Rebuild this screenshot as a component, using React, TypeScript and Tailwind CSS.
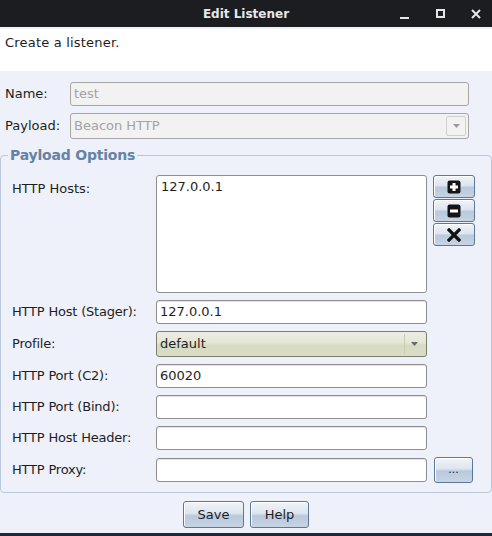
import React from "react";

const FONT = { fontFamily: '"DejaVu Sans", "Liberation Sans", sans-serif' };

function TextBox({ value = "", className = "" }: { value?: string; className?: string }) {
	return (
		<div
			className={`h-[24px] w-[271px] rounded-[3px] border border-[#8e8e8e] bg-white px-[3px] text-[13px] leading-[22px] text-[#1e1e1e] shadow-[inset_0_1px_1px_rgba(0,0,0,0.12)] ${className}`}
		>
			{value}
		</div>
	);
}

function BlueButton({ children, className = "" }: { children: React.ReactNode; className?: string }) {
	return (
		<div
			className={`flex items-center justify-center rounded-[3px] border border-[#5c7896] bg-[linear-gradient(to_bottom,#f1f4f9_0%,#dde5ef_45%,#b9c9dc_55%,#c6d4e4_100%)] shadow-[inset_1px_1px_0_#ffffff] text-[13px] text-[#1e1e1e] ${className}`}
		>
			{children}
		</div>
	);
}

function Row({ label, children }: { label: string; children: React.ReactNode }) {
	return (
		<div className="flex items-center">
			<div className="w-[144px] text-[13px] tracking-[-0.2px] text-[#1e1e1e]">{label}</div>
			{children}
		</div>
	);
}

function SquareIcon({ kind }: { kind: "plus" | "minus" | "x" }) {
	if (kind === "x") {
		return (
			<svg width="14" height="14" viewBox="0 0 14 14">
				<path d="M2 2 L12 12 M12 2 L2 12" stroke="#111" strokeWidth="3.2" strokeLinecap="square" />
			</svg>
		);
	}
	return (
		<svg width="14" height="14" viewBox="0 0 14 14">
			<rect x="0.5" y="0.5" width="13" height="13" rx="2" fill="#141414" />
			<rect x="3" y="5.5" width="8" height="3" fill="#fff" />
			{kind === "plus" && <rect x="5.5" y="3" width="3" height="8" fill="#fff" />}
		</svg>
	);
}

export default function App() {
	return (
		<div className="flex h-[536px] w-[492px] flex-col overflow-hidden bg-[#eef1f9]" style={FONT}>
			<div className="relative flex h-[27px] shrink-0 items-center justify-center bg-[#1b1d21]">
				<span className="text-[12px] font-bold text-[#e8e8e8]">Edit Listener</span>
				<div className="absolute right-[-2px] top-0 flex h-full items-center">
					<div className="flex w-[36px] justify-center pt-[8px]">
						<div className="h-[2px] w-[9px] bg-[#e6e6e6]" />
					</div>
					<div className="flex w-[36px] justify-center">
						<div className="h-[9px] w-[9px] border-[2px] border-[#e6e6e6]" />
					</div>
					<div className="flex w-[36px] justify-center">
						<svg width="10" height="10" viewBox="0 0 10 10">
							<path d="M1 1 L9 9 M9 1 L1 9" stroke="#e6e6e6" strokeWidth="2" />
						</svg>
					</div>
				</div>
			</div>

			<div className="mt-[2px] h-[42px] bg-white px-[5px] pt-[5px] text-[13px] leading-[18px] tracking-[0.2px] text-[#1e1e1e]">
				Create a listener.
			</div>

			<div className="mt-[11px] flex flex-col gap-[7px] px-[5px]">
				<div className="flex items-center">
					<div className="w-[65px] text-[13px] text-[#1e1e1e]">Name:</div>
					<div className="h-[24px] w-[399px] rounded-[3px] border border-[#a6a6a6] bg-[#f2f2f2] px-[3px] text-[13px] leading-[22px] text-[#a3a3a3]">
						test
					</div>
				</div>
				<div className="flex items-center">
					<div className="w-[65px] text-[13px] text-[#1e1e1e]">Payload:</div>
					<div className="flex h-[26px] w-[399px] items-center justify-between rounded-[3px] border border-[#a6a6a6] bg-[#f2f2f2] pl-[3px] pr-[2px] text-[13px] text-[#a3a3a3]">
						<span>Beacon HTTP</span>
						<div className="flex h-[20px] w-[20px] items-center justify-center rounded-[2px] border border-[#d0d0d0]">
							<svg width="7" height="4" viewBox="0 0 7 4">
								<path d="M0 0 H7 L3.5 4 Z" fill="#9a9a9a" />
							</svg>
						</div>
					</div>
				</div>
			</div>

			<fieldset className="mx-0 mt-[7px] rounded-[4px] border border-[#b9c7d9] pb-[9px] pl-[11px] pr-[14px] pt-[11px]">
				<legend className="ml-[-4px] px-[2px] text-[14px] font-bold leading-[18px] tracking-[-0.2px] text-[#6483a6]">
					Payload Options
				</legend>
				<div className="flex flex-col gap-[7px]">
					<div className="flex items-start">
						<div className="w-[144px] pt-[4px] text-[13px] text-[#1e1e1e]">HTTP Hosts:</div>
						<div className="h-[118px] w-[271px] rounded-[3px] border border-[#8e8e8e] bg-white px-[4px] pt-[2px] text-[13px] leading-[18px] text-[#1e1e1e]">
							127.0.0.1
						</div>
						<div className="ml-[6px] flex flex-col gap-[1px]">
							<BlueButton className="h-[23px] w-[42px]">
								<SquareIcon kind="plus" />
							</BlueButton>
							<BlueButton className="h-[23px] w-[42px]">
								<SquareIcon kind="minus" />
							</BlueButton>
							<BlueButton className="h-[23px] w-[42px]">
								<SquareIcon kind="x" />
							</BlueButton>
						</div>
					</div>
					<Row label="HTTP Host (Stager):">
						<TextBox value="127.0.0.1" />
					</Row>
					<Row label="Profile:">
						<div className="flex h-[26px] w-[271px] items-center justify-between rounded-[3px] border border-[#7c7f70] bg-[linear-gradient(to_bottom,#ecede2_0%,#e4e6d6_45%,#d6dbc2_55%,#d9ddc6_100%)] pl-[3px] pr-[2px] text-[13px] text-[#1e1e1e]">
							<span>default</span>
							<div className="flex h-[20px] w-[20px] items-center justify-center border-l border-[#c8cbb8]">
								<svg width="7" height="4" viewBox="0 0 7 4">
									<path d="M0 0 H7 L3.5 4 Z" fill="#6a6a6a" />
								</svg>
							</div>
						</div>
					</Row>
					<Row label="HTTP Port (C2):">
						<TextBox value="60020" />
					</Row>
					<Row label="HTTP Port (Bind):">
						<TextBox />
					</Row>
					<Row label="HTTP Host Header:">
						<TextBox />
					</Row>
					<Row label="HTTP Proxy:">
						<TextBox />
						<BlueButton className="ml-[7px] h-[26px] w-[39px] leading-none">
							<span className="pb-[2px] text-[11px]">...</span>
						</BlueButton>
					</Row>
				</div>
			</fieldset>

			<div className="mt-[8px] flex justify-center gap-[6px]">
				<BlueButton className="h-[27px] w-[61px]">Save</BlueButton>
				<BlueButton className="h-[27px] w-[59px]">Help</BlueButton>
			</div>

			<div className="mt-auto h-[3px] bg-[#1c2b3c]" />
		</div>
	);
}
